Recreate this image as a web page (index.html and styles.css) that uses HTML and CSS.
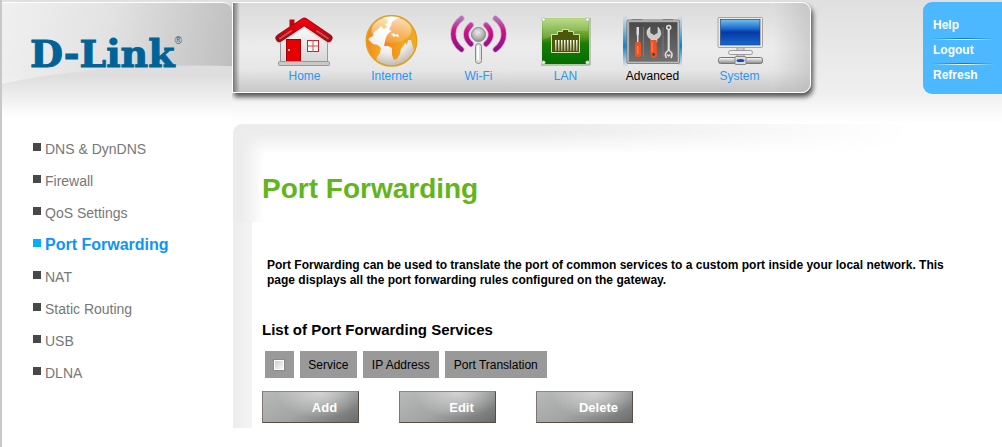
FILE: index.html
```html
<!DOCTYPE html>
<html lang="en">
<head>
    <meta charset="UTF-8">
    <meta name="viewport" content="width=device-width, initial-scale=1.0">
    <title>Port Forwarding</title>
    <link rel="stylesheet" href="styles.css">
</head>
<body>
    <header class="header">
        <div class="logo">
            <span class="logo-text">D-Link</span><span class="logo-mark">®</span>
        </div>

        <nav class="main-nav">
            <a href="#" class="nav-item">
                <svg class="nav-icon" viewBox="0 0 60 52">
                    <defs>
                        <linearGradient id="wall" x1="0" y1="0" x2="0" y2="1"><stop offset="0" stop-color="#fff"/><stop offset="1" stop-color="#d6d6d6"/></linearGradient>
                        <linearGradient id="roof" x1="0" y1="0" x2="0" y2="1"><stop offset="0" stop-color="#f0000c"/><stop offset=".6" stop-color="#d0040e"/><stop offset="1" stop-color="#a01018"/></linearGradient>
                    </defs>
                    <path d="M14.500 4.500h5v10h-5z" fill="#c4000c"/>
                    <path d="M5.500 22 29.500 6 52.500 22V47H5.500z" fill="url(#wall)" stroke="#999"/>
                    <path d="M4.500 25 29.300 9 53.500 25" fill="none" stroke="#bbb" stroke-width="7" stroke-linecap="round" stroke-linejoin="round" opacity=".5"/>
                    <path d="M4.500 23 29.300 6.500 53.500 23" fill="none" stroke="#8e0912" stroke-width="8" stroke-linecap="round" stroke-linejoin="round"/>
                    <path d="M4.500 23 29.300 6.500 53.500 23" fill="none" stroke="url(#roof)" stroke-width="6.500" stroke-linecap="round" stroke-linejoin="round"/>
                    <path d="M5 23.500 16 16M53 23.500 42 16" stroke="#e68a90" stroke-width="2" stroke-linecap="round" opacity=".5"/>
                    <rect x="11.500" y="24.500" width="14" height="22" fill="#e60000" stroke="#a00008"/>
                    <circle cx="14" cy="35" r="1" fill="#fff"/>
                    <rect x="32.500" y="25.500" width="11" height="11" fill="#fff" stroke="#c22"/>
                    <path d="M38 25v12M32 31h12" stroke="#d44"/>
                    <rect x="3.500" y="46.500" width="51" height="4" rx="1" fill="#c8c8c8" stroke="#999"/>
                </svg>
                <span>Home</span>
            </a>
            <a href="#" class="nav-item">
                <svg class="nav-icon" viewBox="0 0 60 52">
                    <defs>
                        <radialGradient id="sea" cx=".45" cy=".3" r=".75"><stop offset="0" stop-color="#fff"/><stop offset=".6" stop-color="#eee"/><stop offset="1" stop-color="#b8b0a0"/></radialGradient>
                        <linearGradient id="land" x1="0" y1="0" x2="1" y2="0"><stop offset="0" stop-color="#f58220"/><stop offset="1" stop-color="#f0b020"/></linearGradient>
                        <linearGradient id="shine" x1="0" y1="0" x2="0" y2="1"><stop offset="0" stop-color="#fff" stop-opacity=".7"/><stop offset="1" stop-color="#fff" stop-opacity=".1"/></linearGradient>
                        <clipPath id="globe"><circle cx="29.500" cy="25.800" r="25"/></clipPath>
                    </defs>
                    <circle cx="29.500" cy="25.800" r="25" fill="url(#sea)"/>
                    <g clip-path="url(#globe)" fill="url(#land)">
                        <path d="M3 24 5 14 12 7l8-4 5 1 1 4-3 1 2 3-3 2-3-3-4 4-3 2-1 4-4 2-1 4-3 1z"/>
                        <path d="M4 26 7 25l4 4 5 1 3 3-1 5-3 4-1 6-4-4-3-7-4-3z"/>
                        <path d="M23.500 24 25 20l3-3 5-1 3 2 4 2 2 4 3 1-3 5-3 4-1 5-3 5-3 1-2-5v-7l-4-2-4 0z"/>
                        <path d="M27 14l2-3 1-4 4-3 6-2 9 6 6 10v12l-2 8-2-6-2-7-3 0-1 5-4-6-4-2-3-4-4 0-1-2z"/>
                        <path d="M29 19l3-1 1 2 3-1 1 3-4-1-1 1z" fill="#fff"/>
                    </g>
                    <ellipse cx="29.500" cy="15" rx="20" ry="13" fill="url(#shine)"/>
                    <circle cx="29.500" cy="25.800" r="25.200" fill="none" stroke="#e0a020" stroke-width="1.500"/>
                </svg>
                <span>Internet</span>
            </a>
            <a href="#" class="nav-item">
                <svg class="nav-icon" viewBox="0 0 60 52">
                    <defs>
                        <radialGradient id="ball" cx=".45" cy=".35" r=".6"><stop offset="0" stop-color="#eee"/><stop offset="1" stop-color="#999"/></radialGradient>
                        <linearGradient id="wave" x1="0" y1="0" x2="0" y2="1"><stop offset="0" stop-color="#b070b8"/><stop offset=".4" stop-color="#d01080"/><stop offset="1" stop-color="#90108c"/></linearGradient>
                        <g id="waves" fill="none" stroke-linecap="round">
                            <path d="M12.500 3.500C1.500 12 1.500 26 12.500 34.500M22 10C15.500 16 15.500 23 22 29" stroke="#cfa8d4" stroke-width="6"/>
                            <path d="M12.500 3.500C1.500 12 1.500 26 12.500 34.500M22 10C15.500 16 15.500 23 22 29" stroke="url(#wave)" stroke-width="4.500"/>
                        </g>
                    </defs>
                    <use href="#waves"/>
                    <use href="#waves" transform="matrix(-1 0 0 1 59 0)"/>
                    <rect x="26.500" y="28.500" width="6" height="20" rx="3" fill="#ddd" stroke="#888"/>
                    <path d="M29 31v14" stroke="#fff" stroke-width="2"/>
                    <circle cx="29.500" cy="19.500" r="7" fill="url(#ball)" stroke="#888"/>
                </svg>
                <span>Wi-Fi</span>
            </a>
            <a href="#" class="nav-item">
                <svg class="nav-icon" viewBox="0 0 60 52">
                    <defs>
                        <linearGradient id="lan" x1="0" y1="0" x2="0" y2="1"><stop offset="0" stop-color="#b4d878"/><stop offset=".4" stop-color="#5c9c20"/><stop offset=".55" stop-color="#1c7c08"/><stop offset="1" stop-color="#006c00"/></linearGradient>
                        <linearGradient id="pins" x1="0" y1="0" x2="0" y2="1"><stop offset="0" stop-color="#fff"/><stop offset="1" stop-color="#a09878"/></linearGradient>
                    </defs>
                    <rect x="5.500" y="2.500" width="48" height="47" fill="url(#lan)" stroke="#dcecd0"/>
                    <path d="M5 50h49V3" fill="none" stroke="#8aa080"/>
                    <path d="M7 25Q28 14 52 16V4H7z" fill="#fff" opacity=".15"/>
                    <path d="M15.500 37.500v-18h6v-3h5v-2h6v2h5v3h6v18z" fill="#4c5808" stroke="#cfe0a8"/>
                    <g fill="url(#pins)">
                        <path d="M19 25h1.500v11H19zM22 25h1.500v11H22zM25 25h1.500v11H25zM28 25h1.500v11H28zM31 25h1.500v11H31zM34 25h1.500v11H34zM37 25h1.500v11H37zM40 25h1.500v11H40z"/>
                    </g>
                    <g fill="#fff" stroke="#8a8" stroke-width=".6"><circle cx="7.500" cy="4.500" r="1.800"/><circle cx="51.500" cy="4.500" r="1.800"/><circle cx="7.500" cy="47.500" r="1.800"/><circle cx="51.500" cy="47.500" r="1.800"/></g>
                </svg>
                <span>LAN</span>
            </a>
            <a href="#" class="nav-item active">
                <svg class="nav-icon" viewBox="0 0 60 52">
                    <defs>
                        <linearGradient id="glow" x1="0" y1="0" x2="0" y2="1"><stop offset="0" stop-color="#1c86cc" stop-opacity="0"/><stop offset=".6" stop-color="#1080c4"/><stop offset="1" stop-color="#1c86cc" stop-opacity="0"/></linearGradient>
                        <linearGradient id="case" x1="0" y1="0" x2="0" y2="1"><stop offset="0" stop-color="#484848"/><stop offset="1" stop-color="#707070"/></linearGradient>
                    </defs>
                    <path d="M0 0h5v52H0zM55 0h4v52h-4z" fill="url(#glow)"/>
                    <path d="M9 6V4.500h10V6M40 6V4.500h10V6" fill="#bbb" stroke="#888"/>
                    <rect x="5" y="6" width="50.500" height="41.500" rx="1" fill="url(#case)" stroke="#777" stroke-width="3"/>
                    <rect x="5" y="6" width="50.500" height="41.500" rx="1" fill="none" stroke="#bdbdbd" stroke-width="1.500"/>
                    <path d="M20.500 12v30M40 12v30" stroke="#888" stroke-width=".7"/>
                    <path d="M13.500 12h2.500v7l-.5 2v6h-1.500v-6l-.5-2z" fill="#ddd"/>
                    <path d="M12.500 27h5l.5 3v10q0 2-3 2t-3-2V30z" fill="#f4511e"/>
                    <path d="M14.800 31v8" stroke="#ffa070"/>
                    <path d="M27 12q-4 3-3 7 1 4 4 5v3h6v-3q3-1 4-5 0-4-3-7v6l-4 2.500-4-2.500z" fill="#ccc" stroke="#eee" stroke-width=".5"/>
                    <path d="M27.500 25h6l.5 15q-.5 3-3.300 3t-3.200-3z" fill="#f4511e"/>
                    <path d="M29 27v10" stroke="#ff9060"/>
                    <circle cx="30.700" cy="39.500" r="1.400" fill="#444"/>
                    <circle cx="45.700" cy="12.500" r="2" fill="none" stroke="#ddd" stroke-width="1.600"/>
                    <path d="M45.700 15v20" stroke="#ddd" stroke-width="2.200"/>
                    <path d="M43.500 43q-2.500-4 .5-6.500l1.700-1.500 1.700 1.500q3 2.500.5 6.500M44 39.500l1.700 1.500 1.700-1.500" fill="none" stroke="#ddd" stroke-width="1.600"/>
                </svg>
                <span>Advanced</span>
            </a>
            <a href="#" class="nav-item">
                <svg class="nav-icon" viewBox="0 0 60 52">
                    <defs>
                        <linearGradient id="screen" x1="0" y1="0" x2="0" y2="1"><stop offset="0" stop-color="#70c0f0"/><stop offset=".35" stop-color="#1c6cd0"/><stop offset=".5" stop-color="#0838a4"/><stop offset="1" stop-color="#1468cc"/></linearGradient>
                        <linearGradient id="metal" x1="0" y1="0" x2="0" y2="1"><stop offset="0" stop-color="#fff"/><stop offset="1" stop-color="#888"/></linearGradient>
                    </defs>
                    <path d="M27 32h7v11h-7z" fill="#ccc" stroke="#999"/>
                    <rect x="8" y="2.500" width="44.500" height="30" rx="1" fill="#eceae4" stroke="#a8a49c"/>
                    <rect x="10.500" y="4.500" width="39.500" height="25.500" fill="url(#screen)" stroke="#204880" stroke-width=".7"/>
                    <rect x="18.500" y="35.500" width="24" height="4" rx="2" fill="#eee" stroke="#999"/>
                    <rect x="8.500" y="42.500" width="44" height="6" rx="2" fill="url(#metal)" stroke="#777"/>
                    <rect x="25" y="41.500" width="11" height="8" rx="1" fill="#ddd" stroke="#888"/>
                    <ellipse cx="30.500" cy="45.500" rx="4" ry="1.600" fill="#1048b8"/>
                </svg>
                <span>System</span>
            </a>
        </nav>

        <div class="user-links">
            <a href="#">Help</a>
            <a href="#">Logout</a>
            <a href="#">Refresh</a>
        </div>
    </header>

    <div class="page">
        <ul class="side-menu">
            <li><a href="#">DNS &amp; DynDNS</a></li>
            <li><a href="#">Firewall</a></li>
            <li><a href="#">QoS Settings</a></li>
            <li class="active"><a href="#">Port Forwarding</a></li>
            <li><a href="#">NAT</a></li>
            <li><a href="#">Static Routing</a></li>
            <li><a href="#">USB</a></li>
            <li><a href="#">DLNA</a></li>
        </ul>

        <main class="content">
            <h1>Port Forwarding</h1>
            <p class="description">Port Forwarding can be used to translate the port of common services to a custom port inside your local network. This page displays all the port forwarding rules configured on the gateway.</p>

            <h2>List of Port Forwarding Services</h2>
            <table class="services">
                <tr>
                    <th><input type="checkbox" aria-label="Select all"></th>
                    <th>Service</th>
                    <th>IP Address</th>
                    <th>Port Translation</th>
                </tr>
            </table>

            <div class="buttons">
                <button type="button">Add</button>
                <button type="button">Edit</button>
                <button type="button">Delete</button>
            </div>
        </main>
    </div>
</body>
</html>
```

FILE: styles.css
```css
* {
    box-sizing: border-box;
}
body {
    margin: 0;
    min-height: 100vh;
    border-left: 2px solid #c8c8c8;
    background: #fff;
    font-family: "Liberation Sans", Arial, sans-serif;
    font-size: 12px;
    color: #000;
}
a {
    text-decoration: none;
}

/* Header */
.header {
    display: flex;
    align-items: flex-start;
    height: 124px;
    padding-top: 2px;
    background: linear-gradient(#e0e0e0, #efefef 75%, #fff);
}
.logo {
    position: relative;
    z-index: 1;
    display: flex;
    align-items: flex-start;
    flex: none;
    width: 230px;
    height: 122px;
    padding: 28px 0 0 28px;
    border-top: 1px solid #fff;
    border-radius: 0 9px 0 0;
    color: #006398;
    background:
        linear-gradient(rgba(255, 255, 255, 0) 60%, #fff 95%),
        radial-gradient(ellipse 330px 100px at 190px 162px, #dedede 99%, transparent 100%),
        linear-gradient(100deg, #f0f0f0, #e2e2e2 45%, #bcbcbc);
}
.logo-text {
    font: bold 38px/46px "DejaVu Serif", serif;
    -webkit-text-stroke: 1px #006398;
}
.logo-mark {
    padding-top: 4px;
    font-size: 10px;
    line-height: 12px;
}
.main-nav {
    display: flex;
    flex: none;
    width: 579px;
    height: 91px;
    padding: 12px 0 0 28px;
    border: 1px solid #fff;
    border-radius: 0 9px 9px 0;
    background:
        linear-gradient(90deg, #777, rgba(200, 200, 200, 0) 7px),
        linear-gradient(90deg, transparent 540px, rgba(180, 180, 180, 0.5) 575px),
        linear-gradient(#dadada, #ececec 50%, #e6e6e6 75%, #c6c6c6);
    box-shadow: 2px 4px 5px rgba(0, 0, 0, 0.65);
}
.nav-item {
    display: flex;
    flex-direction: column;
    align-items: center;
    width: 87px;
    color: #2a95f5;
    line-height: 16px;
}
.nav-item.active {
    color: #000;
}
.nav-icon {
    width: 60px;
    height: 52px;
    margin-bottom: 1px;
}
.user-links {
    width: 79px;
    height: 92px;
    margin-left: auto;
    padding: 11px 7px 0 8px;
    border-radius: 9px 0 0 9px;
    background: #4bb8ff;
}
.user-links a {
    display: block;
    height: 25px;
    padding-left: 2px;
    line-height: 25px;
    font-weight: bold;
    color: #fff;
}
.user-links a + a {
    background: linear-gradient(90deg, transparent, #0878c8 50%, transparent) 0 0 / 100% 1px no-repeat,
        linear-gradient(90deg, transparent, #fff 50%, transparent) 0 1px / 100% 1px no-repeat;
}

/* Page */
.page {
    display: flex;
}
.side-menu {
    flex: none;
    width: 231px;
    margin: 0;
    padding: 9px 0 0 31px;
    list-style: none;
    font-size: 14px;
}
.side-menu li {
    display: flex;
    align-items: center;
    gap: 4px;
    height: 32px;
}
.side-menu li::before {
    content: "";
    width: 8px;
    height: 8px;
    margin-bottom: 4px;
    background: #484848;
}
.side-menu a {
    color: #777;
}
.side-menu .active::before {
    background: #00b0ff;
}
.side-menu .active a {
    font-size: 16px;
    font-weight: bold;
    color: #0c94fb;
}
.content {
    flex: 1;
    min-height: 304px;
    padding: 49px 52px 5px 29px;
    border-radius: 9px 0 0 0;
    background:
        linear-gradient(90deg, #ececec, #f4f4f4) 0 98px / 19px 100% no-repeat,
        linear-gradient(90deg, #ececec 8px, rgba(255, 255, 255, 0) 32px) 0 0 / 100% 98px no-repeat,
        linear-gradient(90deg, rgba(255, 255, 255, 0) 40%, #fff 88%) 0 0 / 100% 30px no-repeat,
        linear-gradient(#ececec 8px, #fff 30px) 0 0 / 100% 30px no-repeat;
}
h1 {
    margin: 0;
    font-size: 28px;
    line-height: 32px;
    color: #62b51c;
}
.description {
    margin: 53px 0 0;
    padding-left: 5px;
    font-weight: bold;
    line-height: 15px;
}
h2 {
    margin: 34px 0 13px;
    font-size: 15px;
    line-height: 16px;
}
.services {
    width: 294px;
    border-spacing: 6px 0;
    margin-left: -3px;
}
.services th {
    height: 27px;
    padding: 0 8px;
    background: #999;
    font-weight: normal;
}
.services input {
    display: block;
    appearance: none;
    width: 12px;
    height: 12px;
    margin: 0 auto;
    border: 1px solid #8a8a8a;
    background: linear-gradient(135deg, #c8c8c8, #fff);
    box-shadow: inset 0 0 0 1px #fff;
}
.buttons {
    display: flex;
    gap: 40px;
    margin-top: 13px;
}
.buttons button {
    width: 97px;
    height: 32px;
    padding: 0 0 0 28px;
    border: 1px solid;
    border-color: #908784 #5c4c48 #5c4c48 #807470;
    background:
        radial-gradient(ellipse 44px 26px at 60% 0, rgba(255, 255, 255, 0.5), rgba(255, 255, 255, 0)),
        linear-gradient(150deg, #b8bab9, #a2a4a3 50%, #6a6c6b);
    font: bold 13px "Liberation Sans", Arial, sans-serif;
    color: #fff;
}
```
